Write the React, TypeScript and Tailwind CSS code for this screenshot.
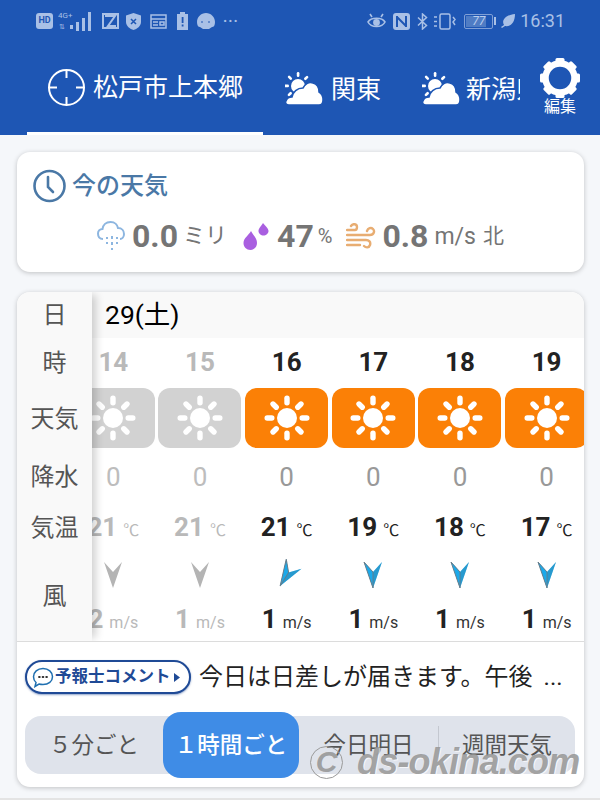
const hours = [
  { hour: "14", rain: "0", temp: "21", wind: "2", turn: 0, past: true },
  { hour: "15", rain: "0", temp: "21", wind: "1", turn: 0, past: true },
  { hour: "16", rain: "0", temp: "21", wind: "1", turn: 32, past: false },
  { hour: "17", rain: "0", temp: "19", wind: "1", turn: 0, past: false },
  { hour: "18", rain: "0", temp: "18", wind: "1", turn: 0, past: false },
  { hour: "19", rain: "0", temp: "17", wind: "1", turn: 0, past: false },
];

const RAYS = [0, 45, 90, 135, 180, 225, 270, 315];

function Sun() {
  return (
    <svg width="46" height="46" viewBox="0 0 46 46" fill="white">
      <circle cx="23" cy="23" r="10" />
      {RAYS.map((r) => (
        <rect key={r} x="20.300" y="0.500" width="5.400" height="10" rx="2.700" transform={`rotate(${r} 23 23)`} />
      ))}
    </svg>
  );
}

function SunCloud() {
  return (
    <svg width="38" height="34" viewBox="0 0 38 34" fill="white">
      <circle cx="13" cy="14" r="7" />
      {[0, 45, 270, 315, 225].map((r) => (
        <rect key={r} x="11.800" y="0" width="2.600" height="5" rx="1.300" transform={`rotate(${r} 13 14)`} />
      ))}
      <path d="M4 33c-3 0-4-2-3-4 1-3 4-4 6-4 1-5 5-9 11-9 3-5 7-6 10-5 4 1 6 5 6 9 2 1 4 4 4 8 0 3-2 5-4 5z" stroke="#1e56b4" strokeWidth="1.500" />
    </svg>
  );
}

function Gear() {
  return (
    <svg width="40" height="42" viewBox="0 0 40 42" className="block">
      <circle cx="20" cy="21" r="14.500" fill="none" stroke="white" strokeWidth="6.500" />
      {RAYS.map((r) => (
        <rect key={r} x="15.500" y="1" width="9" height="7" rx="1.500" fill="white" transform={`rotate(${r} 20 21)`} />
      ))}
    </svg>
  );
}

function WindArrow({ turn, past }: { turn: number; past: boolean }) {
  return (
    <svg width="22" height="30" viewBox="0 0 22 30" style={{ transform: `rotate(${turn}deg)` }}>
      {past ? (
        <path d="M2 2L11 12L20 2L11 28Z" fill="#b4b4b4" />
      ) : (
        <>
          <path d="M2 2L11 12L20 2L11 28Z" fill="#1ba9ea" />
          <path d="M2 2L11 12L11 28Z" fill="#1ba9ea" stroke="#6a7f8c" strokeWidth="1" />
          <path d="M20 2L11 12L11 28Z" fill="#3f7f9f" opacity="0.35" />
        </>
      )}
    </svg>
  );
}

function StatusLeft() {
  return (
    <div className="flex items-center text-[#a9c0e6]">
      <span className="flex h-[16px] w-[17px] items-center justify-center rounded-[3px] bg-[#a9c0e6] text-[9px] font-bold text-[#1e56b4]">HD</span>
      <svg width="36" height="22" viewBox="0 0 36 22" className="ml-[5px]" fill="currentColor">
        <text x="0" y="8" fontSize="8" fontFamily="Roboto">4G+</text>
        <text x="1" y="19" fontSize="7" fontFamily="Roboto">⇅</text>
        <rect x="12" y="15" width="3" height="4" />
        <rect x="18" y="12" width="3" height="9" />
        <rect x="24" y="8" width="3" height="13" />
        <rect x="30" y="2" width="3" height="19" />
      </svg>
      <svg width="17" height="16" viewBox="0 0 17 16" className="ml-[8px]" fill="none" stroke="currentColor" strokeWidth="2">
        <path d="M1 1H16V15H1ZM3 3H13L6 13H14" />
      </svg>
      <svg width="15" height="17" viewBox="0 0 15 17" className="ml-[7px]">
        <path d="M7.500 0L15 2.500V9C15 13 11 16 7.500 17C4 16 0 13 0 9V2.500Z" fill="currentColor" />
        <path d="M5 6L10 11M10 6L5 11" stroke="#1e56b4" strokeWidth="1.500" />
      </svg>
      <svg width="17" height="15" viewBox="0 0 17 15" className="ml-[9px]" fill="none" stroke="currentColor" strokeWidth="1.500">
        <rect x="1" y="1" width="15" height="13" />
        <path d="M1 5H16M3 8H8M3 11H8M10 8H14V11H10Z" />
      </svg>
      <svg width="11" height="18" viewBox="0 0 11 18" className="ml-[10px]">
        <path d="M3 0H8V2H11V18H0V2H3Z" fill="currentColor" />
        <rect x="4.700" y="5" width="1.800" height="6" fill="#1e56b4" />
        <rect x="4.700" y="12.500" width="1.800" height="2" fill="#1e56b4" />
      </svg>
      <svg width="20" height="18" viewBox="0 0 20 18" className="ml-[8px]">
        <path d="M10 1C15 1 19 5 19 10C19 13 18 15 16 15L13 17H7L4 15C2 15 1 13 1 10C1 5 5 1 10 1Z" fill="currentColor" />
        <path d="M6 9V11M13 9V11" stroke="#1e56b4" strokeWidth="1" />
      </svg>
      <span className="ml-[7px] text-[14px] font-bold leading-none tracking-[1px]">···</span>
    </div>
  );
}

function StatusRight() {
  return (
    <div className="flex items-center text-[#a9c0e6]">
      <svg width="19" height="17" viewBox="0 0 19 17" fill="none" stroke="currentColor" strokeWidth="1.600">
        <path d="M1 9C4 4 15 4 18 9C15 15 4 15 1 9Z" />
        <circle cx="9.500" cy="9.500" r="2.600" fill="currentColor" />
        <path d="M3 1L5 4M16 1L14 4" />
      </svg>
      <svg width="17" height="17" viewBox="0 0 17 17" className="ml-[7px]">
        <rect width="17" height="17" rx="3" fill="currentColor" />
        <path d="M4 3V14M13 3V14M4 4L13 13" stroke="#1e56b4" strokeWidth="2" fill="none" />
      </svg>
      <svg width="11" height="17" viewBox="0 0 11 17" className="ml-[7px]" fill="none" stroke="currentColor" strokeWidth="1.500">
        <path d="M1 4.500L9.500 12.500L5.500 16V1L9.500 4.500L1 12.500" />
      </svg>
      <svg width="24" height="17" viewBox="0 0 24 17" className="ml-[5px]" fill="none" stroke="currentColor" strokeWidth="1.500">
        <rect x="7" y="1" width="10" height="15" rx="1.500" />
        <path d="M1 4H4M1 8.500H4M1 13H4M20 4L22 6.500L20 9L22 12" />
      </svg>
      <div className="ml-[7px] flex items-center">
        <div className="relative h-[15px] w-[29px] rounded-[2px] border border-[#7f9fd6]">
          <div className="absolute inset-y-[1px] left-[1px] w-[20px] bg-[#4f7cc4]" />
          <span className="absolute inset-0 flex items-center justify-center text-[12px] italic leading-none text-[#b9cdee]">77</span>
        </div>
        <div className="ml-[1px] h-[8px] w-[2px] bg-[#a9c0e6]" />
      </div>
      <svg width="14" height="14" viewBox="0 0 14 14" className="ml-[5px]" fill="currentColor">
        <path d="M14 0C14 8 10 13 4 12L1 14L0 13L3 11C0 6 5 1 14 0Z" />
      </svg>
      <span className="ml-[5px] text-[18px] leading-none">16:31</span>
    </div>
  );
}

function InfoIcons({ kind }: { kind: "rain" | "drop" | "wind" }) {
  if (kind === "rain") {
    return (
      <svg width="28" height="30" viewBox="0 0 28 30" fill="none" stroke="#8db6e0" strokeWidth="2">
        <path d="M6 18C2 18 1 15 1 12.500C1 10 3 8 5.500 8C6 4 9 1 13.500 1C18 1 20.500 4 21 7C25 7 27 10 27 13C27 16 25 18 23 18" />
        <path d="M10 16V18M15 15V18M20 16V18M10 21V23M15 21V24M20 21V23M15 27V29" stroke="#8db6e0" strokeWidth="2" />
      </svg>
    );
  }
  if (kind === "drop") {
    return (
      <svg width="26" height="27" viewBox="0 0 26 27" fill="#a95fe0">
        <path d="M8 8C10 12 14 15 14 20C14 24 11 27 7.500 27C3.500 27 0.500 24 0.500 20C0.500 15 6 12 8 8Z" />
        <path d="M20 0C22 3 25.500 5 25.500 8C25.500 10.500 23 12.500 20.500 12.500C18 12.500 15.500 10.500 15.500 8C15.500 5 18.500 3 20 0Z" />
      </svg>
    );
  }
  return (
    <svg width="30" height="27" viewBox="0 0 30 27" fill="none" stroke="#e8ad72" strokeWidth="2.400" strokeLinecap="round">
      <path d="M9 7H1M5 3C7 0 11 1 11 4C11 6 10 7 9 7M1 12H24C28 12 29 8 27 6C25 4 22 5 21 8M1 17H20C23 17 25 19 24 22C23 25 20 25 18 23M1 22H14" />
    </svg>
  );
}

function Card({ className, children }: { className: string; children: React.ReactNode }) {
  return (
    <div className={`ml-[17px] mr-[16px] rounded-[13px] bg-white shadow-[0_1px_5px_rgba(0,0,0,0.22)] ${className}`}>
      {children}
    </div>
  );
}

export default function App() {
  return (
    <div
      className="relative flex h-[800px] w-[600px] flex-col overflow-hidden bg-[#f5f7fa]"
      style={{ fontFamily: 'Roboto, "Noto Sans CJK JP", sans-serif' }}
    >
      <header className="h-[135px] shrink-0 bg-[#1e56b4] text-white">
        <div className="flex h-[38px] items-center justify-between pl-[36px] pr-[35px] pt-[4px]">
          <StatusLeft />
          <StatusRight />
        </div>
        <div className="relative flex h-[97px]">
          <div className="flex w-[520px] overflow-hidden pl-[27px]">
            <div className="flex h-full w-[236px] shrink-0 items-center border-b-[3px] border-white pl-[21px] pt-[5px]">
              <svg width="37" height="37" viewBox="0 0 37 37" fill="none" stroke="white" strokeWidth="2">
                <circle cx="18.500" cy="18.500" r="17.500" />
                <path d="M18.500 1V9M18.500 28V36M1 18.500H9M28 18.500H36" />
              </svg>
              <span className="ml-[8px] whitespace-nowrap text-[25px] leading-none">松戸市上本郷</span>
            </div>
            <div className="ml-[22px] flex shrink-0 items-center pt-[5px]">
              <SunCloud />
              <span className="ml-[8px] text-[25px] leading-none">関東</span>
            </div>
            <div className="ml-[41px] flex shrink-0 items-center pt-[5px]">
              <SunCloud />
              <span className="ml-[6px] whitespace-nowrap text-[25px] leading-none">新潟県</span>
            </div>
          </div>
          <div className="flex flex-1 flex-col items-center pt-[19px]">
            <Gear />
            <span className="mt-[-2px] text-[16px] leading-[20px]">編集</span>
          </div>
        </div>
      </header>

      <Card className="mt-[17px] h-[120px] shrink-0 px-[16px] pt-[17px]">
        <div className="flex items-center">
          <svg width="33" height="34" viewBox="0 0 33 34" fill="none" stroke="#4a78a6" strokeWidth="2.600">
            <circle cx="16.500" cy="17" r="15" />
            <path d="M15 8V18L20 23" strokeLinecap="round" />
          </svg>
          <span className="ml-[6px] text-[24px] font-medium leading-none text-[#4a78a6]">今の天気</span>
        </div>
        <div className="mt-[17px] flex items-center pl-[64px] text-[#757575]">
          <InfoIcons kind="rain" />
          <span className="ml-[7px] text-[32px] font-bold leading-none">0.0</span>
          <span className="ml-[5px] text-[22px] leading-none">ミリ</span>
          <span className="ml-[16px]"><InfoIcons kind="drop" /></span>
          <span className="ml-[8px] text-[32px] font-bold leading-none">47</span>
          <span className="ml-[4px] text-[20px] leading-none">%</span>
          <span className="ml-[14px]"><InfoIcons kind="wind" /></span>
          <span className="ml-[6px] text-[32px] font-bold leading-none">0.8</span>
          <span className="ml-[6px] text-[23px] leading-none">m/s</span>
          <span className="ml-[7px] text-[21px] leading-none">北</span>
        </div>
      </Card>

      <Card className="mt-[20px] h-[495px] shrink-0 overflow-hidden">
        <div className="flex h-[350px] overflow-hidden border-b border-[#dcdcdc]">
          <div className="z-10 flex w-[75px] shrink-0 flex-col items-center bg-[#f9f9f9] text-[24px] leading-none text-[#555] shadow-[7px_0_8px_-3px_rgba(0,0,0,0.18)]">
            <div className="flex h-[46px] items-center">日</div>
            <div className="flex h-[50px] items-center">時</div>
            <div className="flex h-[62px] items-center">天気</div>
            <div className="flex h-[56px] items-center">降水</div>
            <div className="flex h-[46px] items-center">気温</div>
            <div className="flex h-[90px] items-center">風</div>
          </div>
          <div className="min-w-0 flex-1 overflow-hidden">
            <div className="flex h-[46px] items-center bg-[#f9f9f9] pl-[13px] text-[26.500px] leading-none text-black">29(土)</div>
            <div className="ml-[-22px] flex w-[520px]">
              {hours.map((h) => (
                <div key={h.hour} className={`flex w-[86.67px] shrink-0 flex-col items-center ${h.past ? "text-[#b9b9b9]" : "text-[#222]"}`}>
                  <div className="flex h-[50px] items-center pb-[3px] text-[26px] font-bold leading-none">{h.hour}</div>
                  <div className={`flex h-[60px] w-[83px] items-center justify-center rounded-[12px] ${h.past ? "bg-[#d2d2d2]" : "bg-[#fb8006]"}`}>
                    <Sun />
                  </div>
                  <div className={`flex h-[58px] items-center text-[26px] leading-none ${h.past ? "text-[#bdbdbd]" : "text-[#999]"}`}>{h.rain}</div>
                  <div className="flex h-[42px] items-baseline pt-[8px]">
                    <span className="text-[26px] font-bold leading-none">{h.temp}</span>
                    <span className="ml-[6px] text-[16px] leading-none">℃</span>
                  </div>
                  <div className="flex h-[54px] items-center">
                    <WindArrow turn={h.turn} past={h.past} />
                  </div>
                  <div className="flex h-[38px] items-baseline pt-[4px]">
                    <span className="text-[26px] font-bold leading-none">{h.wind}</span>
                    <span className={`ml-[6px] text-[16px] leading-none ${h.past ? "" : "text-[#333]"}`}>m/s</span>
                  </div>
                </div>
              ))}
            </div>
          </div>
        </div>

        <div className="flex h-[69px] items-center pl-[8px] pt-[1px]">
          <div className="flex h-[34px] w-[166px] shrink-0 items-center rounded-full border-2 border-[#1f4a96] bg-white pl-[5px] shadow-[0_1px_2px_rgba(31,74,150,0.5)]">
            <svg width="22" height="21" viewBox="0 0 22 21" fill="none" stroke="#1f6fb0" strokeWidth="1.500">
              <path d="M11 1.500C16.500 1.500 20.500 5 20.500 9.800C20.500 14.500 16.500 17.500 11 17.500C9.500 17.500 8 17.300 7 17L3 19.500L4 15.500C2.300 14 1.500 12 1.500 9.800C1.500 5 5.500 1.500 11 1.500Z" />
              <path d="M7 10H7.800M10.600 10H11.400M14.200 10H15" strokeWidth="1.800" stroke="#333" strokeLinecap="round" />
            </svg>
            <span className="ml-[1px] whitespace-nowrap text-[16.5px] font-bold leading-none text-[#1f4a96]">予報士コメント</span>
            <svg width="6" height="9" viewBox="0 0 6 9" className="ml-[3px]" fill="#1f4a96">
              <path d="M0 0L6 4.500L0 9Z" />
            </svg>
          </div>
          <span className="ml-[8px] whitespace-nowrap text-[24px] leading-none text-[#222]">
            今日は日差しが届きます。午後<span className="pl-[11px]">...</span>
          </span>
        </div>

        <div className="ml-[8px] mr-[9px] mt-[5px] flex h-[58px] items-center rounded-[16px] bg-[#dfe3eb] text-[22.500px] leading-none text-[#555]">
          <div className="flex w-[138px] justify-center">５分ごと</div>
          <div className="flex h-[66px] w-[136px] shrink-0 items-center justify-center rounded-[18px] bg-[#3f8ce6] font-medium text-white">１時間ごと</div>
          <div className="flex w-[139px] justify-center">今日明日</div>
          <div className="h-[38px] w-[1px] bg-[#c4c8d0]" />
          <div className="flex flex-1 justify-center">週間天気</div>
        </div>
      </Card>

      {/* next card just peeking in at the bottom */}
      <div className="mt-[11px] h-[2px] bg-[#e4e4e4]" />

      {/* watermark */}
      <div className="pointer-events-none absolute left-[310px] top-[744px] flex items-center text-[#949494]/85">
        <span
          className="flex h-[33px] w-[33px] items-center justify-center rounded-full border border-[#9a9a9a] text-[30px] font-bold italic leading-none"
          style={{ fontFamily: '"Liberation Sans", sans-serif' }}
        >
          C
        </span>
        <span
          className="ml-[14px] whitespace-nowrap text-[36px] font-bold italic leading-none tracking-[-0.8px] [text-shadow:1px_1px_0_rgba(255,255,255,0.7)]"
          style={{ fontFamily: '"Liberation Sans", sans-serif' }}
        >
          ds-okina.com
        </span>
      </div>
    </div>
  );
}
